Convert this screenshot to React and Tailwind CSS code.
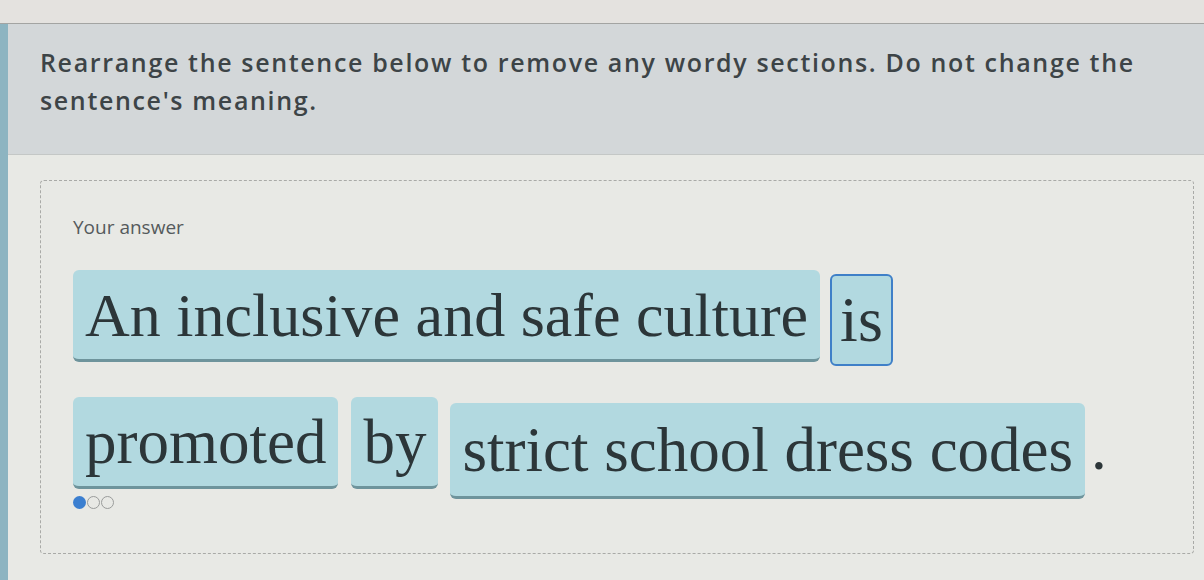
import React from 'react'

// Фишки ответа: вторая строка
const row2 = [
  { text: 'promoted', cls: 'mr-[13px]' },
  { text: 'by', cls: 'mr-[12px] px-[8px]' },
  { text: 'strict school dress codes', cls: 'mr-[6px] mt-[6px] h-[96px] leading-[94px]' },
]

function Chip({ text, active, className = '' }) {
  return (
    <span
      className={`inline-flex items-center rounded-md bg-[#b2d9e0] text-[#2c3639] leading-[90px] h-[92px] ${
        active
          ? 'border-2 border-[#3f80c8] rounded-lg px-[8px]'
          : 'border-b-[3px] border-[#6e949c] px-[12px]'
      } ${className}`}
    >
      {text}
    </span>
  )
}

export default function App() {
  return (
    <div className="w-[1204px] h-[580px] overflow-hidden bg-[#e8e9e5] flex flex-col font-['Open_Sans',sans-serif]">
      {/* Верхняя полоска */}
      <div className="h-[24px] flex-shrink-0 bg-[#e4e2df] border-b border-[#a3a4a2]" />

      <div className="flex flex-1 min-h-0">
        {/* Левая цветная полоса */}
        <div className="w-[8px] flex-shrink-0 bg-[#8db4c1]" />

        <div className="flex-1 flex flex-col">
          {/* Задание */}
          <div className="h-[131px] flex-shrink-0 bg-[#d3d7d9] border-b border-[#c4c7c6] pl-[32px] pt-[19px]">
            <p className="text-[25px] leading-[38px] font-semibold text-[#3d4447] tracking-[1.65px]">
              Rearrange the sentence below to remove any wordy sections. Do not change the
              <br />
              sentence's meaning.
            </p>
          </div>

          {/* Поле ответа */}
          <div className="flex-1 pt-[25px] pl-[32px] pr-[10px] pb-[26px]">
            <div className="h-full border border-dashed border-[#a9aaa7] rounded-sm pl-[32px] pt-[34px]">
              <p className="text-[19px] leading-[24px] text-[#555a5c]">Your answer</p>

              <div className="mt-[31px] flex items-start font-['Liberation_Serif',serif] text-[62px]">
                <Chip text="An inclusive and safe culture" className="mr-[10px]" />
                <Chip text="is" active className="mt-[4px] text-[64px]" />
              </div>

              <div className="mt-[31px] flex items-start font-['Liberation_Serif',serif] text-[63px]">
                {row2.map((c) => (
                  <Chip key={c.text} text={c.text} className={c.cls} />
                ))}
                <span className="leading-[90px] h-[92px] text-[#2c3639] mt-[6px]">.</span>
              </div>

              {/* Индикатор попыток */}
              <div className="flex items-center gap-[1px] -mt-[3px]">
                <span className="w-[13px] h-[13px] rounded-full bg-[#3b7fd0]" />
                <span className="w-[13px] h-[13px] rounded-full border border-[#9a9c9b]" />
                <span className="w-[13px] h-[13px] rounded-full border border-[#9a9c9b]" />
              </div>
            </div>
          </div>
        </div>
      </div>
    </div>
  )
}
